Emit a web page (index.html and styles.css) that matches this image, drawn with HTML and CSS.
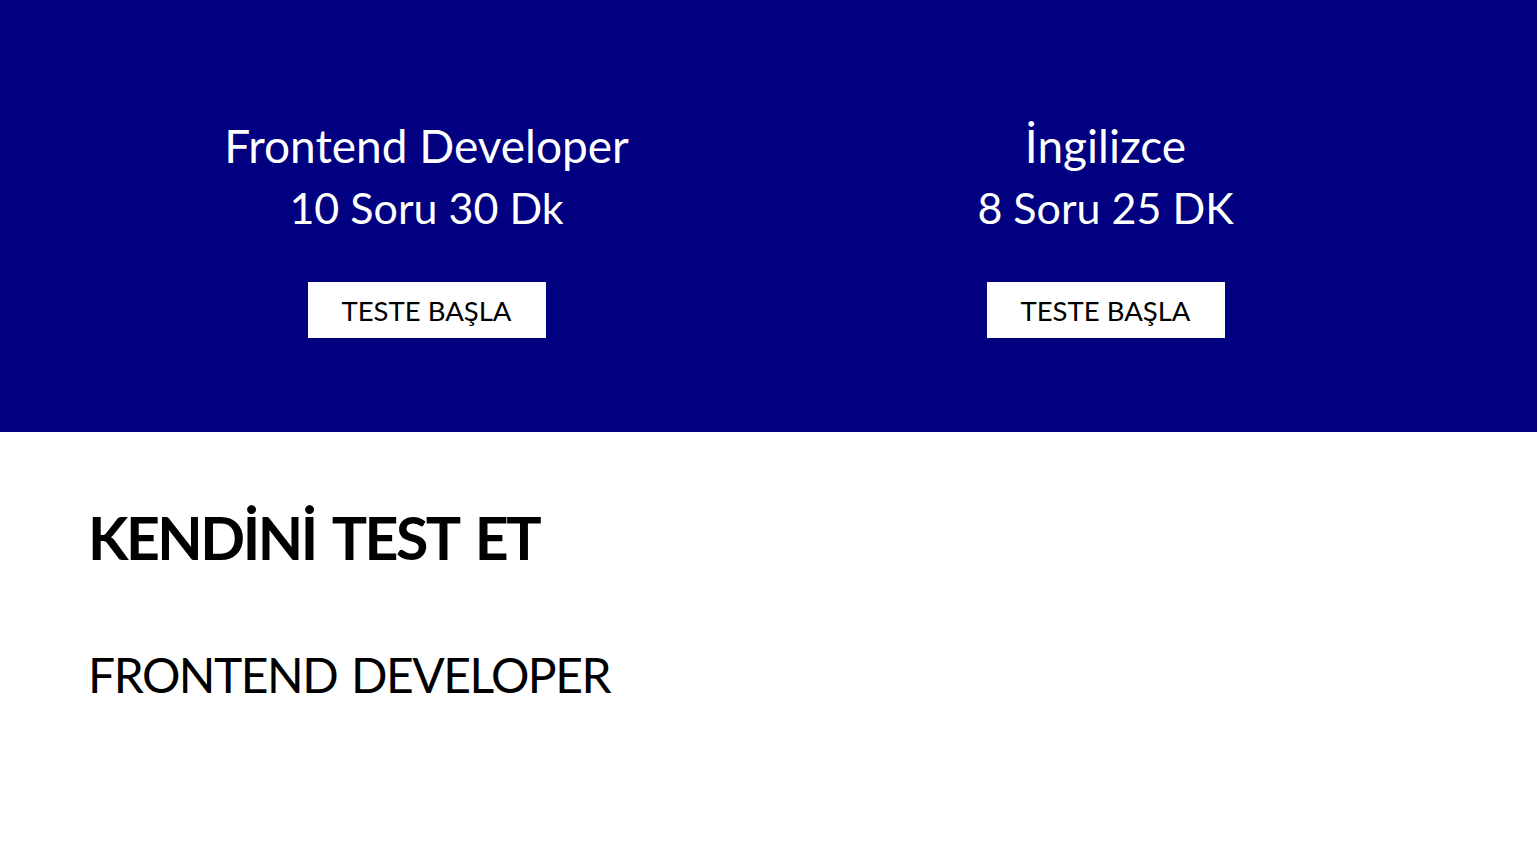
FILE: index.html
```html
<!doctype html>
<html lang="tr">
<head>
    <meta charset="UTF-8">
    <title>Kendini Test Et</title>
    <link rel="stylesheet" href="styles.css">
</head>
<body>
    <div class="hero">
        <div class="test-card">
            <h2 class="test-title">Frontend Developer</h2>
            <p class="test-info">10 Soru 30 Dk</p>
            <a class="test-btn" href="#">TESTE BAŞLA</a>
        </div>
        <div class="test-card">
            <h2 class="test-title">İngilizce</h2>
            <p class="test-info">8 Soru 25 DK</p>
            <a class="test-btn" href="#">TESTE BAŞLA</a>
        </div>
    </div>

    <div class="section">
        <h1 class="section-title">KENDİNİ TEST ET</h1>
        <h3 class="section-sub">FRONTEND DEVELOPER</h3>
    </div>
</body>
</html>
```

FILE: styles.css
```css
*{margin:0;padding:0;box-sizing:border-box;}
body{
    font-family: Lato, "Noto Sans", sans-serif;
    color:#000;
    background:#fff;
}
/* üst mavi alan */
.hero{
    display:grid;
    grid-template-columns:1fr 1fr;
    height:432px;
    padding:116px 92px 0 87px;
    background:#000080;
}
.test-card{
    display:flex;
    flex-direction:column;
    align-items:center;
    color:#fff;
}
.test-title{
    font-size:46px;
    font-weight:400;
    line-height:60px;
}
.test-info{
    margin-top:3px;
    font-size:43px;
    line-height:58px;
}
.test-btn{
    display:flex;
    align-items:center;
    justify-content:center;
    width:238px;
    height:56px;
    margin-top:45px;
    background:#fff;
    color:#000;
    font-size:27.5px;
    text-decoration:none;
}
/* alt kısım */
.section{
    padding:66px 88px 0;
}
.section-title{
    font-size:59px;
    font-weight:700;
    line-height:80px;
    letter-spacing:-2.5px;
    word-spacing:6px;
}
.section-sub{
    margin-top:67px;
    font-size:48px;
    font-weight:400;
    line-height:60px;
    letter-spacing:-1.5px;
    word-spacing:3px;
}
```
